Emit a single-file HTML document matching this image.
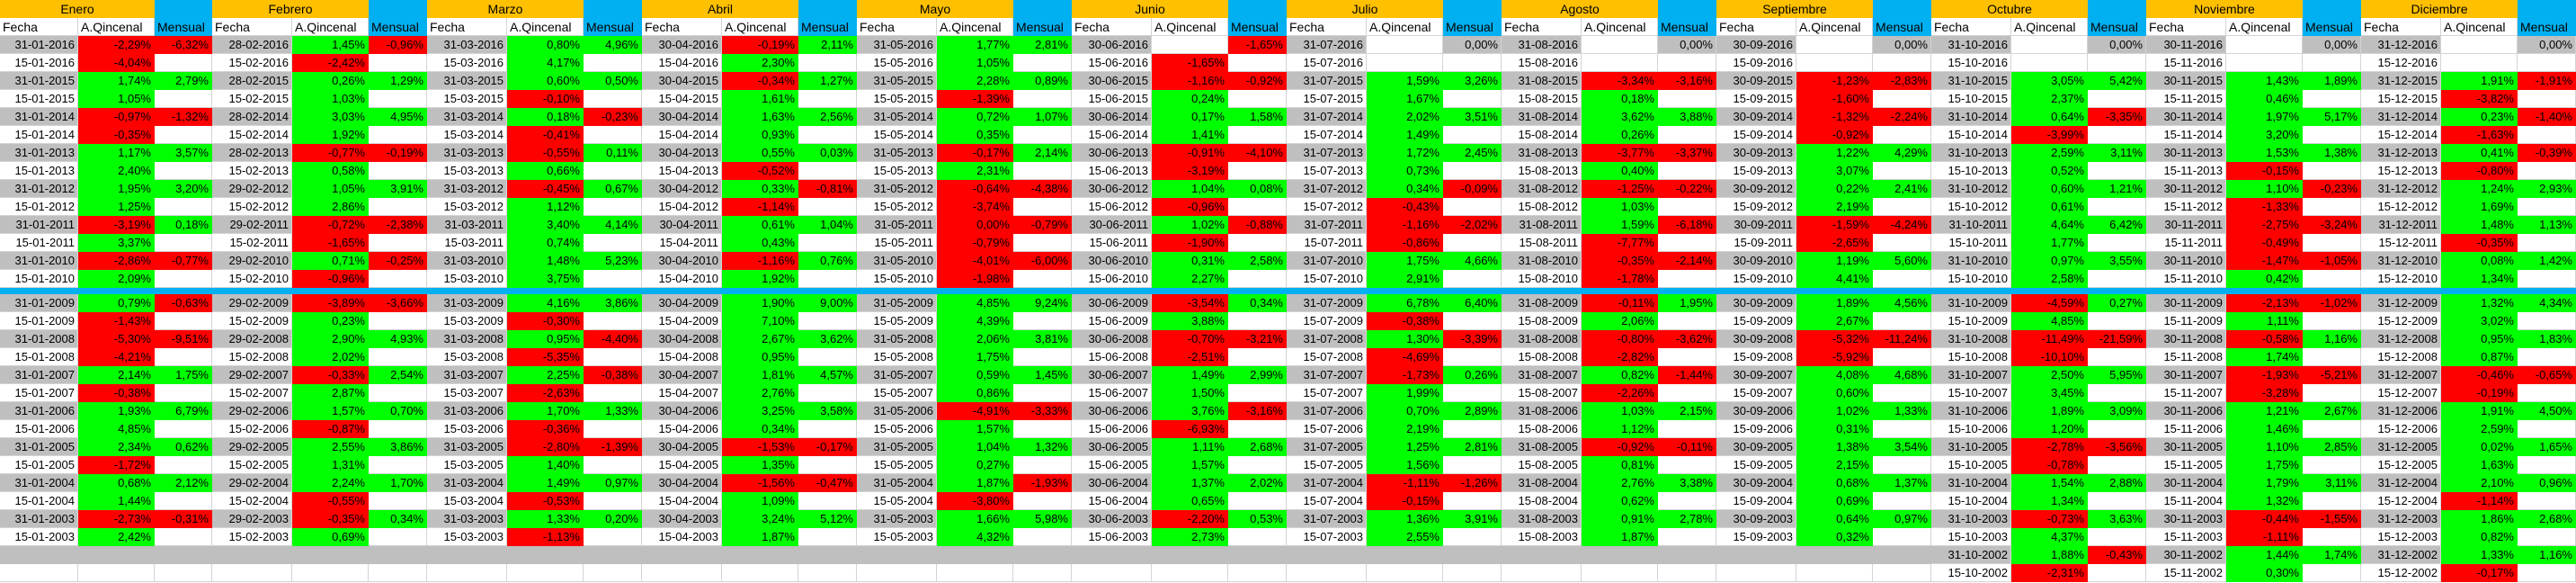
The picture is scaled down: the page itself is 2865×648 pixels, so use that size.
<!DOCTYPE html>
<html><head><meta charset="utf-8"><style>
body{margin:0;width:2865px;height:648px;overflow:hidden;background:#fff;font-family:"Liberation Sans",sans-serif;font-size:13px;color:#000;position:relative}
.mo{position:absolute;top:0}
p{display:flex;height:20px;margin:0}
p i,p b,p em{box-sizing:border-box;height:20px;line-height:20px;border-right:1px solid #d4d4d4;border-bottom:1px solid #d4d4d4;text-align:right;padding-right:3px;overflow:hidden;white-space:nowrap;font-style:normal;font-weight:normal;display:block}
i{width:var(--f)} b{width:var(--q)} em{width:var(--m)}
p.g i{background:#bfbfbf}
.G{background:#00ff00;border-color:#00ff00!important}
.R{background:#ff0000;border-color:#ff0000!important}
.Y{background:#bfbfbf}
p.h i{width:calc(var(--f) + var(--q));background:#ffc000;text-align:center;border:0;padding:0;font-size:14px}
p.h em{background:#00b0f0;border:0}
p.c i,p.c b,p.c em{text-align:left;padding-left:3px;font-size:14px}
p.c em{background:#00b0f0;border-color:#00b0f0}
.sep{height:7px;background:#00b0f0}
p.e i,p.e b,p.e em{background:#bfbfbf;border-color:#bfbfbf}
</style></head><body>

<div class="mo" style="left:0;--f:87px;--q:85px;--m:64px">
<p class="h"><i>Enero</i><em></em></p>
<p class="c"><i>Fecha</i><b>A.Qincenal</b><em>Mensual</em></p>
<p class="g"><i>31-01-2016</i><b class="R">-2,29%</b><em class="R">-6,32%</em></p>
<p><i>15-01-2016</i><b class="R">-4,04%</b><em></em></p>
<p class="g"><i>31-01-2015</i><b class="G">1,74%</b><em class="G">2,79%</em></p>
<p><i>15-01-2015</i><b class="G">1,05%</b><em></em></p>
<p class="g"><i>31-01-2014</i><b class="R">-0,97%</b><em class="R">-1,32%</em></p>
<p><i>15-01-2014</i><b class="R">-0,35%</b><em></em></p>
<p class="g"><i>31-01-2013</i><b class="G">1,17%</b><em class="G">3,57%</em></p>
<p><i>15-01-2013</i><b class="G">2,40%</b><em></em></p>
<p class="g"><i>31-01-2012</i><b class="G">1,95%</b><em class="G">3,20%</em></p>
<p><i>15-01-2012</i><b class="G">1,25%</b><em></em></p>
<p class="g"><i>31-01-2011</i><b class="R">-3,19%</b><em class="G">0,18%</em></p>
<p><i>15-01-2011</i><b class="G">3,37%</b><em></em></p>
<p class="g"><i>31-01-2010</i><b class="R">-2,86%</b><em class="R">-0,77%</em></p>
<p><i>15-01-2010</i><b class="G">2,09%</b><em></em></p>
<div class="sep"></div>
<p class="g"><i>31-01-2009</i><b class="G">0,79%</b><em class="R">-0,63%</em></p>
<p><i>15-01-2009</i><b class="R">-1,43%</b><em></em></p>
<p class="g"><i>31-01-2008</i><b class="R">-5,30%</b><em class="R">-9,51%</em></p>
<p><i>15-01-2008</i><b class="R">-4,21%</b><em></em></p>
<p class="g"><i>31-01-2007</i><b class="G">2,14%</b><em class="G">1,75%</em></p>
<p><i>15-01-2007</i><b class="R">-0,38%</b><em></em></p>
<p class="g"><i>31-01-2006</i><b class="G">1,93%</b><em class="G">6,79%</em></p>
<p><i>15-01-2006</i><b class="G">4,85%</b><em></em></p>
<p class="g"><i>31-01-2005</i><b class="G">2,34%</b><em class="G">0,62%</em></p>
<p><i>15-01-2005</i><b class="R">-1,72%</b><em></em></p>
<p class="g"><i>31-01-2004</i><b class="G">0,68%</b><em class="G">2,12%</em></p>
<p><i>15-01-2004</i><b class="G">1,44%</b><em></em></p>
<p class="g"><i>31-01-2003</i><b class="R">-2,73%</b><em class="R">-0,31%</em></p>
<p><i>15-01-2003</i><b class="G">2,42%</b><em></em></p>
<p class="e"><i></i><b></b><em></em></p>
<p><i></i><b></b><em></em></p>
</div>

<div class="mo" style="left:236px;--f:89px;--q:85px;--m:65px">
<p class="h"><i>Febrero</i><em></em></p>
<p class="c"><i>Fecha</i><b>A.Qincenal</b><em>Mensual</em></p>
<p class="g"><i>28-02-2016</i><b class="G">1,45%</b><em class="R">-0,96%</em></p>
<p><i>15-02-2016</i><b class="R">-2,42%</b><em></em></p>
<p class="g"><i>28-02-2015</i><b class="G">0,26%</b><em class="G">1,29%</em></p>
<p><i>15-02-2015</i><b class="G">1,03%</b><em></em></p>
<p class="g"><i>28-02-2014</i><b class="G">3,03%</b><em class="G">4,95%</em></p>
<p><i>15-02-2014</i><b class="G">1,92%</b><em></em></p>
<p class="g"><i>28-02-2013</i><b class="R">-0,77%</b><em class="R">-0,19%</em></p>
<p><i>15-02-2013</i><b class="G">0,58%</b><em></em></p>
<p class="g"><i>29-02-2012</i><b class="G">1,05%</b><em class="G">3,91%</em></p>
<p><i>15-02-2012</i><b class="G">2,86%</b><em></em></p>
<p class="g"><i>29-02-2011</i><b class="R">-0,72%</b><em class="R">-2,38%</em></p>
<p><i>15-02-2011</i><b class="R">-1,65%</b><em></em></p>
<p class="g"><i>29-02-2010</i><b class="G">0,71%</b><em class="R">-0,25%</em></p>
<p><i>15-02-2010</i><b class="R">-0,96%</b><em></em></p>
<div class="sep"></div>
<p class="g"><i>29-02-2009</i><b class="R">-3,89%</b><em class="R">-3,66%</em></p>
<p><i>15-02-2009</i><b class="G">0,23%</b><em></em></p>
<p class="g"><i>29-02-2008</i><b class="G">2,90%</b><em class="G">4,93%</em></p>
<p><i>15-02-2008</i><b class="G">2,02%</b><em></em></p>
<p class="g"><i>29-02-2007</i><b class="R">-0,33%</b><em class="G">2,54%</em></p>
<p><i>15-02-2007</i><b class="G">2,87%</b><em></em></p>
<p class="g"><i>29-02-2006</i><b class="G">1,57%</b><em class="G">0,70%</em></p>
<p><i>15-02-2006</i><b class="R">-0,87%</b><em></em></p>
<p class="g"><i>29-02-2005</i><b class="G">2,55%</b><em class="G">3,86%</em></p>
<p><i>15-02-2005</i><b class="G">1,31%</b><em></em></p>
<p class="g"><i>29-02-2004</i><b class="G">2,24%</b><em class="G">1,70%</em></p>
<p><i>15-02-2004</i><b class="R">-0,55%</b><em></em></p>
<p class="g"><i>29-02-2003</i><b class="R">-0,35%</b><em class="G">0,34%</em></p>
<p><i>15-02-2003</i><b class="G">0,69%</b><em></em></p>
<p class="e"><i></i><b></b><em></em></p>
<p><i></i><b></b><em></em></p>
</div>

<div class="mo" style="left:475px;--f:89px;--q:85px;--m:65px">
<p class="h"><i>Marzo</i><em></em></p>
<p class="c"><i>Fecha</i><b>A.Qincenal</b><em>Mensual</em></p>
<p class="g"><i>31-03-2016</i><b class="G">0,80%</b><em class="G">4,96%</em></p>
<p><i>15-03-2016</i><b class="G">4,17%</b><em></em></p>
<p class="g"><i>31-03-2015</i><b class="G">0,60%</b><em class="G">0,50%</em></p>
<p><i>15-03-2015</i><b class="R">-0,10%</b><em></em></p>
<p class="g"><i>31-03-2014</i><b class="G">0,18%</b><em class="R">-0,23%</em></p>
<p><i>15-03-2014</i><b class="R">-0,41%</b><em></em></p>
<p class="g"><i>31-03-2013</i><b class="R">-0,55%</b><em class="G">0,11%</em></p>
<p><i>15-03-2013</i><b class="G">0,66%</b><em></em></p>
<p class="g"><i>31-03-2012</i><b class="R">-0,45%</b><em class="G">0,67%</em></p>
<p><i>15-03-2012</i><b class="G">1,12%</b><em></em></p>
<p class="g"><i>31-03-2011</i><b class="G">3,40%</b><em class="G">4,14%</em></p>
<p><i>15-03-2011</i><b class="G">0,74%</b><em></em></p>
<p class="g"><i>31-03-2010</i><b class="G">1,48%</b><em class="G">5,23%</em></p>
<p><i>15-03-2010</i><b class="G">3,75%</b><em></em></p>
<div class="sep"></div>
<p class="g"><i>31-03-2009</i><b class="G">4,16%</b><em class="G">3,86%</em></p>
<p><i>15-03-2009</i><b class="R">-0,30%</b><em></em></p>
<p class="g"><i>31-03-2008</i><b class="G">0,95%</b><em class="R">-4,40%</em></p>
<p><i>15-03-2008</i><b class="R">-5,35%</b><em></em></p>
<p class="g"><i>31-03-2007</i><b class="G">2,25%</b><em class="R">-0,38%</em></p>
<p><i>15-03-2007</i><b class="R">-2,63%</b><em></em></p>
<p class="g"><i>31-03-2006</i><b class="G">1,70%</b><em class="G">1,33%</em></p>
<p><i>15-03-2006</i><b class="R">-0,36%</b><em></em></p>
<p class="g"><i>31-03-2005</i><b class="R">-2,80%</b><em class="R">-1,39%</em></p>
<p><i>15-03-2005</i><b class="G">1,40%</b><em></em></p>
<p class="g"><i>31-03-2004</i><b class="G">1,49%</b><em class="G">0,97%</em></p>
<p><i>15-03-2004</i><b class="R">-0,53%</b><em></em></p>
<p class="g"><i>31-03-2003</i><b class="G">1,33%</b><em class="G">0,20%</em></p>
<p><i>15-03-2003</i><b class="R">-1,13%</b><em></em></p>
<p class="e"><i></i><b></b><em></em></p>
<p><i></i><b></b><em></em></p>
</div>

<div class="mo" style="left:714px;--f:89px;--q:85px;--m:65px">
<p class="h"><i>Abril</i><em></em></p>
<p class="c"><i>Fecha</i><b>A.Qincenal</b><em>Mensual</em></p>
<p class="g"><i>30-04-2016</i><b class="R">-0,19%</b><em class="G">2,11%</em></p>
<p><i>15-04-2016</i><b class="G">2,30%</b><em></em></p>
<p class="g"><i>30-04-2015</i><b class="R">-0,34%</b><em class="G">1,27%</em></p>
<p><i>15-04-2015</i><b class="G">1,61%</b><em></em></p>
<p class="g"><i>30-04-2014</i><b class="G">1,63%</b><em class="G">2,56%</em></p>
<p><i>15-04-2014</i><b class="G">0,93%</b><em></em></p>
<p class="g"><i>30-04-2013</i><b class="G">0,55%</b><em class="G">0,03%</em></p>
<p><i>15-04-2013</i><b class="R">-0,52%</b><em></em></p>
<p class="g"><i>30-04-2012</i><b class="G">0,33%</b><em class="R">-0,81%</em></p>
<p><i>15-04-2012</i><b class="R">-1,14%</b><em></em></p>
<p class="g"><i>30-04-2011</i><b class="G">0,61%</b><em class="G">1,04%</em></p>
<p><i>15-04-2011</i><b class="G">0,43%</b><em></em></p>
<p class="g"><i>30-04-2010</i><b class="R">-1,16%</b><em class="G">0,76%</em></p>
<p><i>15-04-2010</i><b class="G">1,92%</b><em></em></p>
<div class="sep"></div>
<p class="g"><i>30-04-2009</i><b class="G">1,90%</b><em class="G">9,00%</em></p>
<p><i>15-04-2009</i><b class="G">7,10%</b><em></em></p>
<p class="g"><i>30-04-2008</i><b class="G">2,67%</b><em class="G">3,62%</em></p>
<p><i>15-04-2008</i><b class="G">0,95%</b><em></em></p>
<p class="g"><i>30-04-2007</i><b class="G">1,81%</b><em class="G">4,57%</em></p>
<p><i>15-04-2007</i><b class="G">2,76%</b><em></em></p>
<p class="g"><i>30-04-2006</i><b class="G">3,25%</b><em class="G">3,58%</em></p>
<p><i>15-04-2006</i><b class="G">0,34%</b><em></em></p>
<p class="g"><i>30-04-2005</i><b class="R">-1,53%</b><em class="R">-0,17%</em></p>
<p><i>15-04-2005</i><b class="G">1,35%</b><em></em></p>
<p class="g"><i>30-04-2004</i><b class="R">-1,56%</b><em class="R">-0,47%</em></p>
<p><i>15-04-2004</i><b class="G">1,09%</b><em></em></p>
<p class="g"><i>30-04-2003</i><b class="G">3,24%</b><em class="G">5,12%</em></p>
<p><i>15-04-2003</i><b class="G">1,87%</b><em></em></p>
<p class="e"><i></i><b></b><em></em></p>
<p><i></i><b></b><em></em></p>
</div>

<div class="mo" style="left:953px;--f:89px;--q:85px;--m:65px">
<p class="h"><i>Mayo</i><em></em></p>
<p class="c"><i>Fecha</i><b>A.Qincenal</b><em>Mensual</em></p>
<p class="g"><i>31-05-2016</i><b class="G">1,77%</b><em class="G">2,81%</em></p>
<p><i>15-05-2016</i><b class="G">1,05%</b><em></em></p>
<p class="g"><i>31-05-2015</i><b class="G">2,28%</b><em class="G">0,89%</em></p>
<p><i>15-05-2015</i><b class="R">-1,39%</b><em></em></p>
<p class="g"><i>31-05-2014</i><b class="G">0,72%</b><em class="G">1,07%</em></p>
<p><i>15-05-2014</i><b class="G">0,35%</b><em></em></p>
<p class="g"><i>31-05-2013</i><b class="R">-0,17%</b><em class="G">2,14%</em></p>
<p><i>15-05-2013</i><b class="G">2,31%</b><em></em></p>
<p class="g"><i>31-05-2012</i><b class="R">-0,64%</b><em class="R">-4,38%</em></p>
<p><i>15-05-2012</i><b class="R">-3,74%</b><em></em></p>
<p class="g"><i>31-05-2011</i><b class="R">0,00%</b><em class="R">-0,79%</em></p>
<p><i>15-05-2011</i><b class="R">-0,79%</b><em></em></p>
<p class="g"><i>31-05-2010</i><b class="R">-4,01%</b><em class="R">-6,00%</em></p>
<p><i>15-05-2010</i><b class="R">-1,98%</b><em></em></p>
<div class="sep"></div>
<p class="g"><i>31-05-2009</i><b class="G">4,85%</b><em class="G">9,24%</em></p>
<p><i>15-05-2009</i><b class="G">4,39%</b><em></em></p>
<p class="g"><i>31-05-2008</i><b class="G">2,06%</b><em class="G">3,81%</em></p>
<p><i>15-05-2008</i><b class="G">1,75%</b><em></em></p>
<p class="g"><i>31-05-2007</i><b class="G">0,59%</b><em class="G">1,45%</em></p>
<p><i>15-05-2007</i><b class="G">0,86%</b><em></em></p>
<p class="g"><i>31-05-2006</i><b class="R">-4,91%</b><em class="R">-3,33%</em></p>
<p><i>15-05-2006</i><b class="G">1,57%</b><em></em></p>
<p class="g"><i>31-05-2005</i><b class="G">1,04%</b><em class="G">1,32%</em></p>
<p><i>15-05-2005</i><b class="G">0,27%</b><em></em></p>
<p class="g"><i>31-05-2004</i><b class="G">1,87%</b><em class="R">-1,93%</em></p>
<p><i>15-05-2004</i><b class="R">-3,80%</b><em></em></p>
<p class="g"><i>31-05-2003</i><b class="G">1,66%</b><em class="G">5,98%</em></p>
<p><i>15-05-2003</i><b class="G">4,32%</b><em></em></p>
<p class="e"><i></i><b></b><em></em></p>
<p><i></i><b></b><em></em></p>
</div>

<div class="mo" style="left:1192px;--f:89px;--q:85px;--m:65px">
<p class="h"><i>Junio</i><em></em></p>
<p class="c"><i>Fecha</i><b>A.Qincenal</b><em>Mensual</em></p>
<p class="g"><i>30-06-2016</i><b></b><em class="R">-1,65%</em></p>
<p><i>15-06-2016</i><b class="R">-1,65%</b><em></em></p>
<p class="g"><i>30-06-2015</i><b class="R">-1,16%</b><em class="R">-0,92%</em></p>
<p><i>15-06-2015</i><b class="G">0,24%</b><em></em></p>
<p class="g"><i>30-06-2014</i><b class="G">0,17%</b><em class="G">1,58%</em></p>
<p><i>15-06-2014</i><b class="G">1,41%</b><em></em></p>
<p class="g"><i>30-06-2013</i><b class="R">-0,91%</b><em class="R">-4,10%</em></p>
<p><i>15-06-2013</i><b class="R">-3,19%</b><em></em></p>
<p class="g"><i>30-06-2012</i><b class="G">1,04%</b><em class="G">0,08%</em></p>
<p><i>15-06-2012</i><b class="R">-0,96%</b><em></em></p>
<p class="g"><i>30-06-2011</i><b class="G">1,02%</b><em class="R">-0,88%</em></p>
<p><i>15-06-2011</i><b class="R">-1,90%</b><em></em></p>
<p class="g"><i>30-06-2010</i><b class="G">0,31%</b><em class="G">2,58%</em></p>
<p><i>15-06-2010</i><b class="G">2,27%</b><em></em></p>
<div class="sep"></div>
<p class="g"><i>30-06-2009</i><b class="R">-3,54%</b><em class="G">0,34%</em></p>
<p><i>15-06-2009</i><b class="G">3,88%</b><em></em></p>
<p class="g"><i>30-06-2008</i><b class="R">-0,70%</b><em class="R">-3,21%</em></p>
<p><i>15-06-2008</i><b class="R">-2,51%</b><em></em></p>
<p class="g"><i>30-06-2007</i><b class="G">1,49%</b><em class="G">2,99%</em></p>
<p><i>15-06-2007</i><b class="G">1,50%</b><em></em></p>
<p class="g"><i>30-06-2006</i><b class="G">3,76%</b><em class="R">-3,16%</em></p>
<p><i>15-06-2006</i><b class="R">-6,93%</b><em></em></p>
<p class="g"><i>30-06-2005</i><b class="G">1,11%</b><em class="G">2,68%</em></p>
<p><i>15-06-2005</i><b class="G">1,57%</b><em></em></p>
<p class="g"><i>30-06-2004</i><b class="G">1,37%</b><em class="G">2,02%</em></p>
<p><i>15-06-2004</i><b class="G">0,65%</b><em></em></p>
<p class="g"><i>30-06-2003</i><b class="R">-2,20%</b><em class="G">0,53%</em></p>
<p><i>15-06-2003</i><b class="G">2,73%</b><em></em></p>
<p class="e"><i></i><b></b><em></em></p>
<p><i></i><b></b><em></em></p>
</div>

<div class="mo" style="left:1431px;--f:89px;--q:85px;--m:65px">
<p class="h"><i>Julio</i><em></em></p>
<p class="c"><i>Fecha</i><b>A.Qincenal</b><em>Mensual</em></p>
<p class="g"><i>31-07-2016</i><b></b><em class="Y">0,00%</em></p>
<p><i>15-07-2016</i><b></b><em></em></p>
<p class="g"><i>31-07-2015</i><b class="G">1,59%</b><em class="G">3,26%</em></p>
<p><i>15-07-2015</i><b class="G">1,67%</b><em></em></p>
<p class="g"><i>31-07-2014</i><b class="G">2,02%</b><em class="G">3,51%</em></p>
<p><i>15-07-2014</i><b class="G">1,49%</b><em></em></p>
<p class="g"><i>31-07-2013</i><b class="G">1,72%</b><em class="G">2,45%</em></p>
<p><i>15-07-2013</i><b class="G">0,73%</b><em></em></p>
<p class="g"><i>31-07-2012</i><b class="G">0,34%</b><em class="R">-0,09%</em></p>
<p><i>15-07-2012</i><b class="R">-0,43%</b><em></em></p>
<p class="g"><i>31-07-2011</i><b class="R">-1,16%</b><em class="R">-2,02%</em></p>
<p><i>15-07-2011</i><b class="R">-0,86%</b><em></em></p>
<p class="g"><i>31-07-2010</i><b class="G">1,75%</b><em class="G">4,66%</em></p>
<p><i>15-07-2010</i><b class="G">2,91%</b><em></em></p>
<div class="sep"></div>
<p class="g"><i>31-07-2009</i><b class="G">6,78%</b><em class="G">6,40%</em></p>
<p><i>15-07-2009</i><b class="R">-0,38%</b><em></em></p>
<p class="g"><i>31-07-2008</i><b class="G">1,30%</b><em class="R">-3,39%</em></p>
<p><i>15-07-2008</i><b class="R">-4,69%</b><em></em></p>
<p class="g"><i>31-07-2007</i><b class="R">-1,73%</b><em class="G">0,26%</em></p>
<p><i>15-07-2007</i><b class="G">1,99%</b><em></em></p>
<p class="g"><i>31-07-2006</i><b class="G">0,70%</b><em class="G">2,89%</em></p>
<p><i>15-07-2006</i><b class="G">2,19%</b><em></em></p>
<p class="g"><i>31-07-2005</i><b class="G">1,25%</b><em class="G">2,81%</em></p>
<p><i>15-07-2005</i><b class="G">1,56%</b><em></em></p>
<p class="g"><i>31-07-2004</i><b class="R">-1,11%</b><em class="R">-1,26%</em></p>
<p><i>15-07-2004</i><b class="R">-0,15%</b><em></em></p>
<p class="g"><i>31-07-2003</i><b class="G">1,36%</b><em class="G">3,91%</em></p>
<p><i>15-07-2003</i><b class="G">2,55%</b><em></em></p>
<p class="e"><i></i><b></b><em></em></p>
<p><i></i><b></b><em></em></p>
</div>

<div class="mo" style="left:1670px;--f:89px;--q:85px;--m:65px">
<p class="h"><i>Agosto</i><em></em></p>
<p class="c"><i>Fecha</i><b>A.Qincenal</b><em>Mensual</em></p>
<p class="g"><i>31-08-2016</i><b></b><em class="Y">0,00%</em></p>
<p><i>15-08-2016</i><b></b><em></em></p>
<p class="g"><i>31-08-2015</i><b class="R">-3,34%</b><em class="R">-3,16%</em></p>
<p><i>15-08-2015</i><b class="G">0,18%</b><em></em></p>
<p class="g"><i>31-08-2014</i><b class="G">3,62%</b><em class="G">3,88%</em></p>
<p><i>15-08-2014</i><b class="G">0,26%</b><em></em></p>
<p class="g"><i>31-08-2013</i><b class="R">-3,77%</b><em class="R">-3,37%</em></p>
<p><i>15-08-2013</i><b class="G">0,40%</b><em></em></p>
<p class="g"><i>31-08-2012</i><b class="R">-1,25%</b><em class="R">-0,22%</em></p>
<p><i>15-08-2012</i><b class="G">1,03%</b><em></em></p>
<p class="g"><i>31-08-2011</i><b class="G">1,59%</b><em class="R">-6,18%</em></p>
<p><i>15-08-2011</i><b class="R">-7,77%</b><em></em></p>
<p class="g"><i>31-08-2010</i><b class="R">-0,35%</b><em class="R">-2,14%</em></p>
<p><i>15-08-2010</i><b class="R">-1,78%</b><em></em></p>
<div class="sep"></div>
<p class="g"><i>31-08-2009</i><b class="R">-0,11%</b><em class="G">1,95%</em></p>
<p><i>15-08-2009</i><b class="G">2,06%</b><em></em></p>
<p class="g"><i>31-08-2008</i><b class="R">-0,80%</b><em class="R">-3,62%</em></p>
<p><i>15-08-2008</i><b class="R">-2,82%</b><em></em></p>
<p class="g"><i>31-08-2007</i><b class="G">0,82%</b><em class="R">-1,44%</em></p>
<p><i>15-08-2007</i><b class="R">-2,26%</b><em></em></p>
<p class="g"><i>31-08-2006</i><b class="G">1,03%</b><em class="G">2,15%</em></p>
<p><i>15-08-2006</i><b class="G">1,12%</b><em></em></p>
<p class="g"><i>31-08-2005</i><b class="R">-0,92%</b><em class="R">-0,11%</em></p>
<p><i>15-08-2005</i><b class="G">0,81%</b><em></em></p>
<p class="g"><i>31-08-2004</i><b class="G">2,76%</b><em class="G">3,38%</em></p>
<p><i>15-08-2004</i><b class="G">0,62%</b><em></em></p>
<p class="g"><i>31-08-2003</i><b class="G">0,91%</b><em class="G">2,78%</em></p>
<p><i>15-08-2003</i><b class="G">1,87%</b><em></em></p>
<p class="e"><i></i><b></b><em></em></p>
<p><i></i><b></b><em></em></p>
</div>

<div class="mo" style="left:1909px;--f:89px;--q:85px;--m:65px">
<p class="h"><i>Septiembre</i><em></em></p>
<p class="c"><i>Fecha</i><b>A.Qincenal</b><em>Mensual</em></p>
<p class="g"><i>30-09-2016</i><b></b><em class="Y">0,00%</em></p>
<p><i>15-09-2016</i><b></b><em></em></p>
<p class="g"><i>30-09-2015</i><b class="R">-1,23%</b><em class="R">-2,83%</em></p>
<p><i>15-09-2015</i><b class="R">-1,60%</b><em></em></p>
<p class="g"><i>30-09-2014</i><b class="R">-1,32%</b><em class="R">-2,24%</em></p>
<p><i>15-09-2014</i><b class="R">-0,92%</b><em></em></p>
<p class="g"><i>30-09-2013</i><b class="G">1,22%</b><em class="G">4,29%</em></p>
<p><i>15-09-2013</i><b class="G">3,07%</b><em></em></p>
<p class="g"><i>30-09-2012</i><b class="G">0,22%</b><em class="G">2,41%</em></p>
<p><i>15-09-2012</i><b class="G">2,19%</b><em></em></p>
<p class="g"><i>30-09-2011</i><b class="R">-1,59%</b><em class="R">-4,24%</em></p>
<p><i>15-09-2011</i><b class="R">-2,65%</b><em></em></p>
<p class="g"><i>30-09-2010</i><b class="G">1,19%</b><em class="G">5,60%</em></p>
<p><i>15-09-2010</i><b class="G">4,41%</b><em></em></p>
<div class="sep"></div>
<p class="g"><i>30-09-2009</i><b class="G">1,89%</b><em class="G">4,56%</em></p>
<p><i>15-09-2009</i><b class="G">2,67%</b><em></em></p>
<p class="g"><i>30-09-2008</i><b class="R">-5,32%</b><em class="R">-11,24%</em></p>
<p><i>15-09-2008</i><b class="R">-5,92%</b><em></em></p>
<p class="g"><i>30-09-2007</i><b class="G">4,08%</b><em class="G">4,68%</em></p>
<p><i>15-09-2007</i><b class="G">0,60%</b><em></em></p>
<p class="g"><i>30-09-2006</i><b class="G">1,02%</b><em class="G">1,33%</em></p>
<p><i>15-09-2006</i><b class="G">0,31%</b><em></em></p>
<p class="g"><i>30-09-2005</i><b class="G">1,38%</b><em class="G">3,54%</em></p>
<p><i>15-09-2005</i><b class="G">2,15%</b><em></em></p>
<p class="g"><i>30-09-2004</i><b class="G">0,68%</b><em class="G">1,37%</em></p>
<p><i>15-09-2004</i><b class="G">0,69%</b><em></em></p>
<p class="g"><i>30-09-2003</i><b class="G">0,64%</b><em class="G">0,97%</em></p>
<p><i>15-09-2003</i><b class="G">0,32%</b><em></em></p>
<p class="e"><i></i><b></b><em></em></p>
<p><i></i><b></b><em></em></p>
</div>

<div class="mo" style="left:2148px;--f:89px;--q:85px;--m:65px">
<p class="h"><i>Octubre</i><em></em></p>
<p class="c"><i>Fecha</i><b>A.Qincenal</b><em>Mensual</em></p>
<p class="g"><i>31-10-2016</i><b></b><em class="Y">0,00%</em></p>
<p><i>15-10-2016</i><b></b><em></em></p>
<p class="g"><i>31-10-2015</i><b class="G">3,05%</b><em class="G">5,42%</em></p>
<p><i>15-10-2015</i><b class="G">2,37%</b><em></em></p>
<p class="g"><i>31-10-2014</i><b class="G">0,64%</b><em class="R">-3,35%</em></p>
<p><i>15-10-2014</i><b class="R">-3,99%</b><em></em></p>
<p class="g"><i>31-10-2013</i><b class="G">2,59%</b><em class="G">3,11%</em></p>
<p><i>15-10-2013</i><b class="G">0,52%</b><em></em></p>
<p class="g"><i>31-10-2012</i><b class="G">0,60%</b><em class="G">1,21%</em></p>
<p><i>15-10-2012</i><b class="G">0,61%</b><em></em></p>
<p class="g"><i>31-10-2011</i><b class="G">4,64%</b><em class="G">6,42%</em></p>
<p><i>15-10-2011</i><b class="G">1,77%</b><em></em></p>
<p class="g"><i>31-10-2010</i><b class="G">0,97%</b><em class="G">3,55%</em></p>
<p><i>15-10-2010</i><b class="G">2,58%</b><em></em></p>
<div class="sep"></div>
<p class="g"><i>31-10-2009</i><b class="R">-4,59%</b><em class="G">0,27%</em></p>
<p><i>15-10-2009</i><b class="G">4,85%</b><em></em></p>
<p class="g"><i>31-10-2008</i><b class="R">-11,49%</b><em class="R">-21,59%</em></p>
<p><i>15-10-2008</i><b class="R">-10,10%</b><em></em></p>
<p class="g"><i>31-10-2007</i><b class="G">2,50%</b><em class="G">5,95%</em></p>
<p><i>15-10-2007</i><b class="G">3,45%</b><em></em></p>
<p class="g"><i>31-10-2006</i><b class="G">1,89%</b><em class="G">3,09%</em></p>
<p><i>15-10-2006</i><b class="G">1,20%</b><em></em></p>
<p class="g"><i>31-10-2005</i><b class="R">-2,78%</b><em class="R">-3,56%</em></p>
<p><i>15-10-2005</i><b class="R">-0,78%</b><em></em></p>
<p class="g"><i>31-10-2004</i><b class="G">1,54%</b><em class="G">2,88%</em></p>
<p><i>15-10-2004</i><b class="G">1,34%</b><em></em></p>
<p class="g"><i>31-10-2003</i><b class="R">-0,73%</b><em class="G">3,63%</em></p>
<p><i>15-10-2003</i><b class="G">4,37%</b><em></em></p>
<p class="g"><i>31-10-2002</i><b class="G">1,88%</b><em class="R">-0,43%</em></p>
<p><i>15-10-2002</i><b class="R">-2,31%</b><em></em></p>
</div>

<div class="mo" style="left:2387px;--f:89px;--q:85px;--m:65px">
<p class="h"><i>Noviembre</i><em></em></p>
<p class="c"><i>Fecha</i><b>A.Qincenal</b><em>Mensual</em></p>
<p class="g"><i>30-11-2016</i><b></b><em class="Y">0,00%</em></p>
<p><i>15-11-2016</i><b></b><em></em></p>
<p class="g"><i>30-11-2015</i><b class="G">1,43%</b><em class="G">1,89%</em></p>
<p><i>15-11-2015</i><b class="G">0,46%</b><em></em></p>
<p class="g"><i>30-11-2014</i><b class="G">1,97%</b><em class="G">5,17%</em></p>
<p><i>15-11-2014</i><b class="G">3,20%</b><em></em></p>
<p class="g"><i>30-11-2013</i><b class="G">1,53%</b><em class="G">1,38%</em></p>
<p><i>15-11-2013</i><b class="R">-0,15%</b><em></em></p>
<p class="g"><i>30-11-2012</i><b class="G">1,10%</b><em class="R">-0,23%</em></p>
<p><i>15-11-2012</i><b class="R">-1,33%</b><em></em></p>
<p class="g"><i>30-11-2011</i><b class="R">-2,75%</b><em class="R">-3,24%</em></p>
<p><i>15-11-2011</i><b class="R">-0,49%</b><em></em></p>
<p class="g"><i>30-11-2010</i><b class="R">-1,47%</b><em class="R">-1,05%</em></p>
<p><i>15-11-2010</i><b class="G">0,42%</b><em></em></p>
<div class="sep"></div>
<p class="g"><i>30-11-2009</i><b class="R">-2,13%</b><em class="R">-1,02%</em></p>
<p><i>15-11-2009</i><b class="G">1,11%</b><em></em></p>
<p class="g"><i>30-11-2008</i><b class="R">-0,58%</b><em class="G">1,16%</em></p>
<p><i>15-11-2008</i><b class="G">1,74%</b><em></em></p>
<p class="g"><i>30-11-2007</i><b class="R">-1,93%</b><em class="R">-5,21%</em></p>
<p><i>15-11-2007</i><b class="R">-3,28%</b><em></em></p>
<p class="g"><i>30-11-2006</i><b class="G">1,21%</b><em class="G">2,67%</em></p>
<p><i>15-11-2006</i><b class="G">1,46%</b><em></em></p>
<p class="g"><i>30-11-2005</i><b class="G">1,10%</b><em class="G">2,85%</em></p>
<p><i>15-11-2005</i><b class="G">1,75%</b><em></em></p>
<p class="g"><i>30-11-2004</i><b class="G">1,79%</b><em class="G">3,11%</em></p>
<p><i>15-11-2004</i><b class="G">1,32%</b><em></em></p>
<p class="g"><i>30-11-2003</i><b class="R">-0,44%</b><em class="R">-1,55%</em></p>
<p><i>15-11-2003</i><b class="R">-1,11%</b><em></em></p>
<p class="g"><i>30-11-2002</i><b class="G">1,44%</b><em class="G">1,74%</em></p>
<p><i>15-11-2002</i><b class="G">0,30%</b><em></em></p>
</div>

<div class="mo" style="left:2626px;--f:89px;--q:85px;--m:65px">
<p class="h"><i>Diciembre</i><em></em></p>
<p class="c"><i>Fecha</i><b>A.Qincenal</b><em>Mensual</em></p>
<p class="g"><i>31-12-2016</i><b></b><em class="Y">0,00%</em></p>
<p><i>15-12-2016</i><b></b><em></em></p>
<p class="g"><i>31-12-2015</i><b class="G">1,91%</b><em class="R">-1,91%</em></p>
<p><i>15-12-2015</i><b class="R">-3,82%</b><em></em></p>
<p class="g"><i>31-12-2014</i><b class="G">0,23%</b><em class="R">-1,40%</em></p>
<p><i>15-12-2014</i><b class="R">-1,63%</b><em></em></p>
<p class="g"><i>31-12-2013</i><b class="G">0,41%</b><em class="R">-0,39%</em></p>
<p><i>15-12-2013</i><b class="R">-0,80%</b><em></em></p>
<p class="g"><i>31-12-2012</i><b class="G">1,24%</b><em class="G">2,93%</em></p>
<p><i>15-12-2012</i><b class="G">1,69%</b><em></em></p>
<p class="g"><i>31-12-2011</i><b class="G">1,48%</b><em class="G">1,13%</em></p>
<p><i>15-12-2011</i><b class="R">-0,35%</b><em></em></p>
<p class="g"><i>31-12-2010</i><b class="G">0,08%</b><em class="G">1,42%</em></p>
<p><i>15-12-2010</i><b class="G">1,34%</b><em></em></p>
<div class="sep"></div>
<p class="g"><i>31-12-2009</i><b class="G">1,32%</b><em class="G">4,34%</em></p>
<p><i>15-12-2009</i><b class="G">3,02%</b><em></em></p>
<p class="g"><i>31-12-2008</i><b class="G">0,95%</b><em class="G">1,83%</em></p>
<p><i>15-12-2008</i><b class="G">0,87%</b><em></em></p>
<p class="g"><i>31-12-2007</i><b class="R">-0,46%</b><em class="R">-0,65%</em></p>
<p><i>15-12-2007</i><b class="R">-0,19%</b><em></em></p>
<p class="g"><i>31-12-2006</i><b class="G">1,91%</b><em class="G">4,50%</em></p>
<p><i>15-12-2006</i><b class="G">2,59%</b><em></em></p>
<p class="g"><i>31-12-2005</i><b class="G">0,02%</b><em class="G">1,65%</em></p>
<p><i>15-12-2005</i><b class="G">1,63%</b><em></em></p>
<p class="g"><i>31-12-2004</i><b class="G">2,10%</b><em class="G">0,96%</em></p>
<p><i>15-12-2004</i><b class="R">-1,14%</b><em></em></p>
<p class="g"><i>31-12-2003</i><b class="G">1,86%</b><em class="G">2,68%</em></p>
<p><i>15-12-2003</i><b class="G">0,82%</b><em></em></p>
<p class="g"><i>31-12-2002</i><b class="G">1,33%</b><em class="G">1,16%</em></p>
<p><i>15-12-2002</i><b class="R">-0,17%</b><em></em></p>
</div>

</body></html>
